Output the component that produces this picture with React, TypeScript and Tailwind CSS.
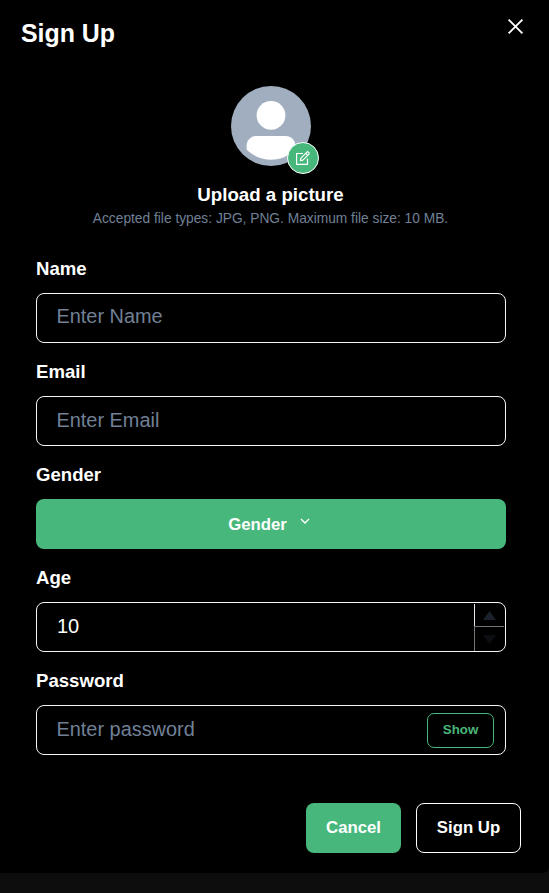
import type { ReactNode } from "react";

const control = "h-[50px] w-full rounded-[8px] border border-[#f4f6f9] bg-black";
const textInput = "px-[19.5px] text-[19.9px] placeholder:text-[#718096]";

function Field({ label, children }: { label: string; children: ReactNode }) {
  return (
    <div className="flex flex-col">
      <label className="flex h-[25px] items-center pb-[1px] text-[18.6px] font-bold leading-[25px]">{label}</label>
      <div className="mt-[12px] h-[50px]">{children}</div>
    </div>
  );
}

function Avatar() {
  return (
    <div className="relative h-20 w-20 rounded-full bg-[#a0aec0]">
      <svg viewBox="0 0 128 128" className="h-20 w-20" fill="#fff">
        <path d="M103,102.1388 C93.094,111.92 79.3504,118 64.1638,118 C48.8056,118 34.9294,111.768 25,101.7892 L25,95.2 C25,86.8096 31.981,80 40.6,80 L87.4,80 C96.019,80 103,86.8096 103,95.2 L103,102.1388 Z" />
        <circle cx="64" cy="47" r="23" />
      </svg>
      <button
        aria-label="Edit picture"
        className="absolute left-[56px] top-[56px] flex h-8 w-8 items-center justify-center rounded-full border border-white bg-[#48b77b]"
      >
        <svg width="16" height="16" viewBox="0 0 16 16" fill="none" stroke="#fff" strokeWidth="1.2" strokeLinejoin="round">
          <path d="M8 3.5H1.6V14.4H12.5V8.4" />
          <path d="M5.4 10.6 5.9 8.1 11.9 2.1a1 1 0 0 1 1.4 0l.6.6a1 1 0 0 1 0 1.4L7.9 10.1Z" />
          <path d="m10.7 3.3 2 2" />
        </svg>
      </button>
    </div>
  );
}

export default function App() {
  return (
    <div className="h-[893px] w-[549px] bg-[#0d0d0d] font-['Liberation_Sans',Arial,sans-serif] text-white">
      <section className="flex h-[873px] flex-col rounded-br-[6px] bg-black">
        <header className="flex h-[86px] items-start justify-between pl-[21px] pr-[25px]">
          <h1 className="pt-[18px] text-[24.9px] font-bold leading-[30px]">Sign Up</h1>
          <button aria-label="Close" className="mt-[18px]">
            <svg width="17" height="17" viewBox="0 0 17 17" fill="none" stroke="#fff" strokeWidth="1.9">
              <path d="M1.6 1.6 15.4 15.4M15.4 1.6 1.6 15.4" />
            </svg>
          </button>
        </header>
        <div className="flex flex-col items-center pr-[7px]">
          <Avatar />
          <p className="mt-[16px] pr-[1px] text-[18.7px] font-bold leading-[26px]">Upload a picture</p>
          <p className="pr-[1px] pt-[1px] text-[13.75px] leading-[19px] text-[#718096]">
            Accepted file types: JPG, PNG. Maximum file size: 10 MB.
          </p>
        </div>
        <form className="flex flex-col gap-[16px] pl-[36px] pr-[43px] pt-[28px]">
          <Field label="Name">
            <input className={`${control} ${textInput} pb-[3px]`} placeholder="Enter Name" />
          </Field>
          <Field label="Email">
            <input className={`${control} ${textInput} pb-[1px]`} placeholder="Enter Email" />
          </Field>
          <Field label="Gender">
            <button type="button" className="flex h-[50px] w-full items-center justify-center rounded-[8px] bg-[#48b77b] pr-[4px] pt-[1px] text-[16.75px] font-bold">
              Gender
              <svg className="mb-[7px] ml-[13px]" width="10" height="8" viewBox="0 0 10 8" fill="none" stroke="currentColor" strokeWidth="1.4">
                <path d="m1 2 4 4 4-4" />
              </svg>
            </button>
          </Field>
          <Field label="Age">
            <div className={`${control} flex items-center`}>
              <span className="flex-1 pb-[2px] pl-[20px] text-[20px]">10</span>
              <div className="flex h-[48px] w-[31px] flex-col pr-[1px] pt-[1px]">
                <div className="flex h-[22px] items-center justify-center border-l border-[#e2e8f0] pt-[1px]">
                  <svg width="13" height="9" viewBox="0 0 13 9" fill="#1a202c"><path d="M6.5 0 13 9H0Z" /></svg>
                </div>
                <div className="flex flex-1 items-center justify-center border-l border-t border-[#73767a]">
                  <svg width="13" height="9" viewBox="0 0 13 9" fill="#0b0e13"><path d="M0 0h13L6.5 9Z" /></svg>
                </div>
              </div>
            </div>
          </Field>
          <Field label="Password">
            <div className={`${control} flex items-center pr-[11px]`}>
              <input className={`${textInput} min-w-0 flex-1 bg-transparent`} placeholder="Enter password" />
              <button type="button" className="h-[35px] w-[67px] rounded-[7px] border border-[#48b77b] text-[13.3px] font-bold text-[#48b77b]">Show</button>
            </div>
          </Field>
        </form>
        <footer className="mt-[48px] flex justify-end gap-[15px] pr-[28px] text-[16.75px] font-bold">
          <button className="h-[50px] w-[95px] rounded-[8px] bg-[#48b77b]">Cancel</button>
          <button className="h-[50px] w-[105px] rounded-[8px] border border-white">Sign Up</button>
        </footer>
      </section>
    </div>
  );
}
